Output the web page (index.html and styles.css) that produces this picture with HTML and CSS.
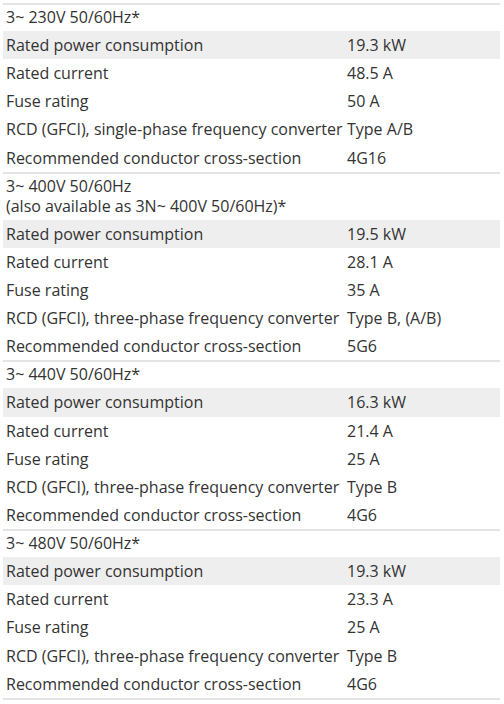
FILE: index.html
```html
<!DOCTYPE html>
<html>
<head>
<meta charset="utf-8">
<link rel="stylesheet" href="styles.css">
</head>
<body>
<table class="spec">
  <colgroup><col class="c-label"><col class="c-value"></colgroup>
  <tbody class="group">
    <tr class="head"><td colspan="2">3~ 230V 50/60Hz*</td></tr>
    <tr class="shade"><td>Rated power consumption</td><td>19.3 kW</td></tr>
    <tr><td>Rated current</td><td>48.5 A</td></tr>
    <tr><td>Fuse rating</td><td>50 A</td></tr>
    <tr><td>RCD (GFCI), single-phase frequency converter</td><td>Type A/B</td></tr>
    <tr><td>Recommended conductor cross-section</td><td>4G16</td></tr>
  </tbody>
  <tbody class="group">
    <tr class="head"><td colspan="2">3~ 400V 50/60Hz<br>(also available as 3N~ 400V 50/60Hz)*</td></tr>
    <tr class="shade"><td>Rated power consumption</td><td>19.5 kW</td></tr>
    <tr><td>Rated current</td><td>28.1 A</td></tr>
    <tr><td>Fuse rating</td><td>35 A</td></tr>
    <tr><td>RCD (GFCI), three-phase frequency converter</td><td>Type B, (A/B)</td></tr>
    <tr><td>Recommended conductor cross-section</td><td>5G6</td></tr>
  </tbody>
  <tbody class="group">
    <tr class="head"><td colspan="2">3~ 440V 50/60Hz*</td></tr>
    <tr class="shade"><td>Rated power consumption</td><td>16.3 kW</td></tr>
    <tr><td>Rated current</td><td>21.4 A</td></tr>
    <tr><td>Fuse rating</td><td>25 A</td></tr>
    <tr><td>RCD (GFCI), three-phase frequency converter</td><td>Type B</td></tr>
    <tr><td>Recommended conductor cross-section</td><td>4G6</td></tr>
  </tbody>
  <tbody class="group last">
    <tr class="head"><td colspan="2">3~ 480V 50/60Hz*</td></tr>
    <tr class="shade"><td>Rated power consumption</td><td>19.3 kW</td></tr>
    <tr><td>Rated current</td><td>23.3 A</td></tr>
    <tr><td>Fuse rating</td><td>25 A</td></tr>
    <tr><td>RCD (GFCI), three-phase frequency converter</td><td>Type B</td></tr>
    <tr><td>Recommended conductor cross-section</td><td>4G6</td></tr>
  </tbody>
</table>
</body>
</html>
```
FILE: styles.css
```css
html, body {
  margin: 0;
  padding: 0;
  background: #ffffff;
}
body {
  padding: 3px 4px 0 3px;
  font-family: "Open Sans", "Liberation Sans", sans-serif;
  font-size: 16px;
  color: #333333;
}
.spec {
  width: 497px;
  border-collapse: collapse;
  table-layout: fixed;
}
.c-label { width: 341px; }
.c-value { width: 156px; }
.spec td {
  height: 20px;
  padding: 4px 3px 4.15px 3px;
  line-height: 20px;
  vertical-align: top;
  white-space: nowrap;
}
.group {
  border-top: 2px solid #e4e4e4;
}
.group.last {
  border-bottom: 2px solid #e4e4e4;
}
.shade td {
  background: #eeeeee;
}
.spec .head td {
  padding-top: 2px;
  padding-bottom: 4px;
}
```
